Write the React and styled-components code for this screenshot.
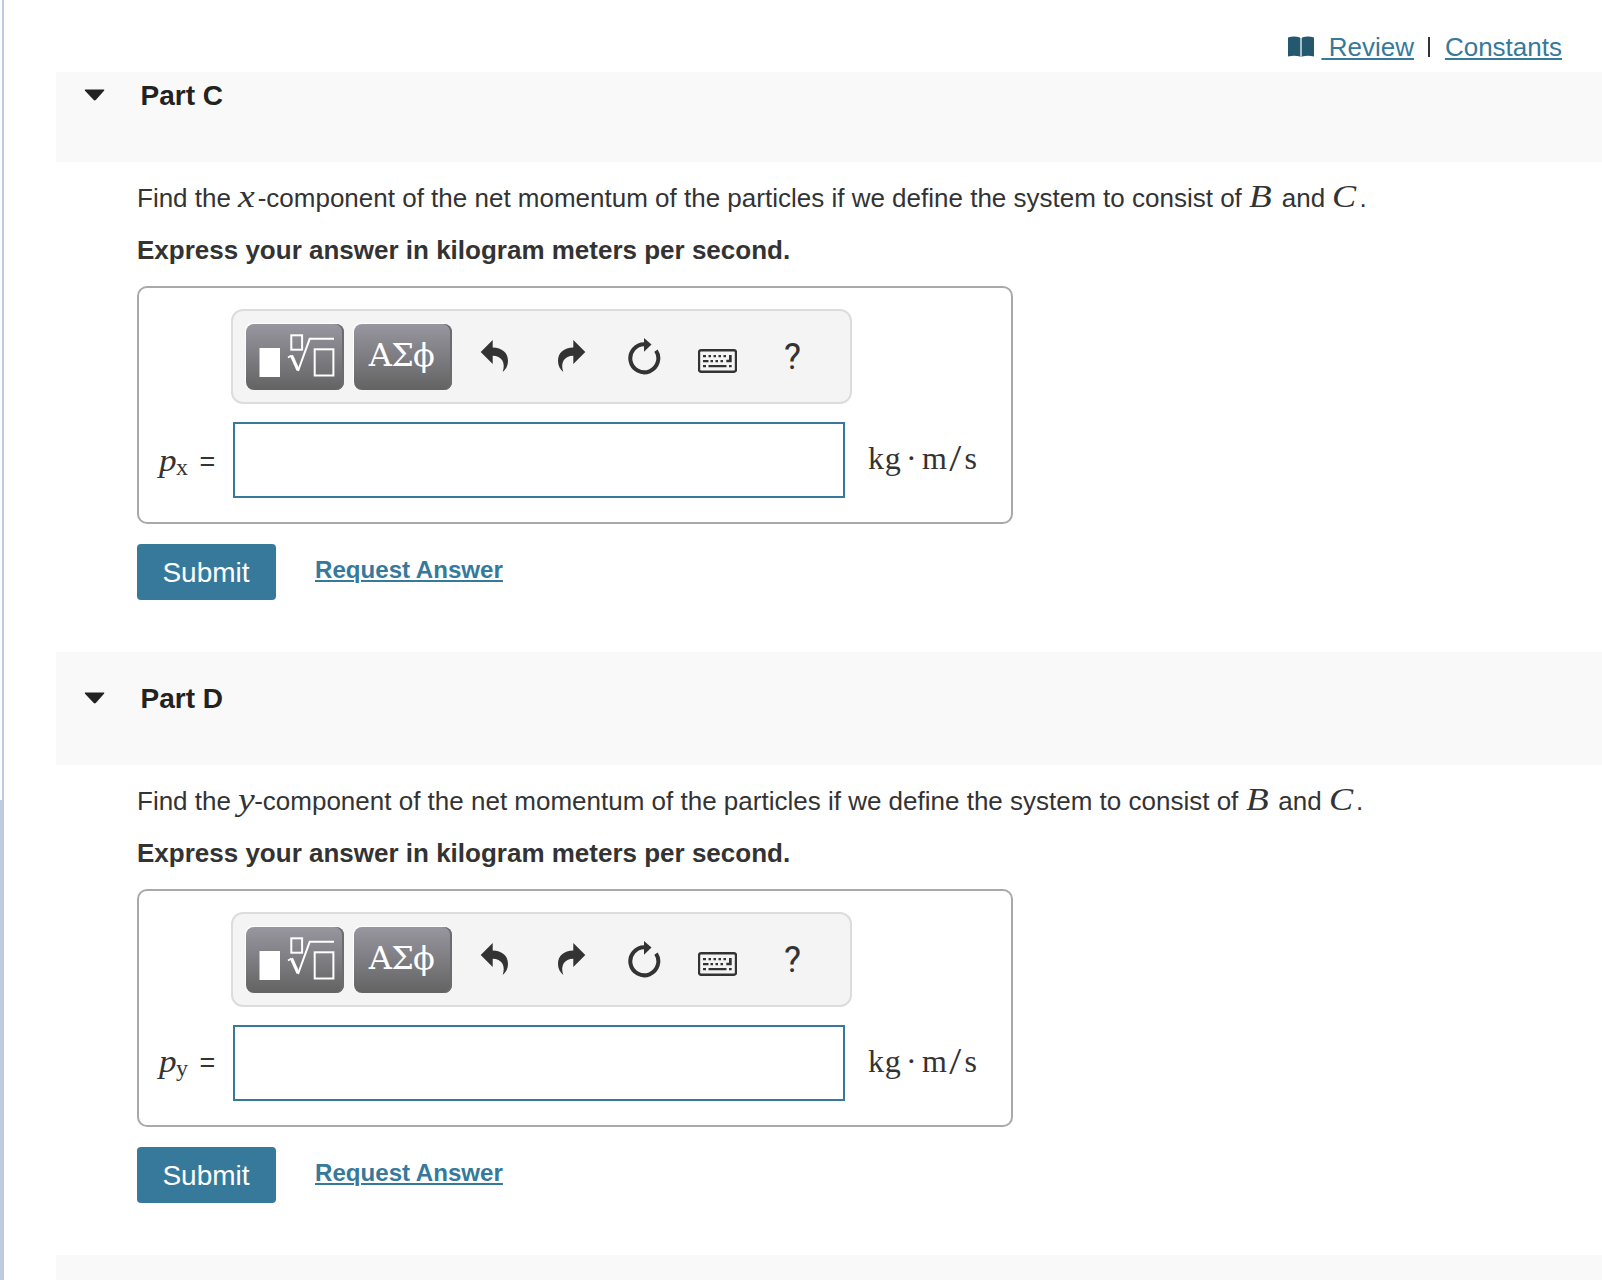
import styled, { createGlobalStyle } from "styled-components"

const parts = [
    { name: "Part C", axis: "x", top: 0, shift: 1 },
    { name: "Part D", axis: "y", top: 23, shift: -3 },
]

const UndoIcon = () => (
    <svg width="29" height="34" viewBox="0 0 29 34" fill="#333">
        <path d="M.7 12 12.700 0v7.600C22 8 28 12.500 28 21c0 4.500-2 8.500-5.300 11C26 22.500 21.500 16 12.700 15.800V24z" />
    </svg>
)

const RedoIcon = () => (
    <svg width="29" height="34" viewBox="0 0 29 34" fill="#333">
        <path d="M28.300 12 16.300 0v7.600C7 8 1 12.500 1 21c0 4.500 2 8.500 5.300 11C3 22.500 7.500 16 16.300 15.800V24z" />
    </svg>
)

const ResetIcon = () => (
    <svg width="34" height="38" viewBox="0 0 34 38">
        <path d="M17.500 6.300a14 14 0 1 0 11.500 6.300" fill="none" stroke="#333" strokeWidth="4" />
        <path d="M17 0 24.500 6.600 17 13.700z" fill="#333" />
    </svg>
)

const KeyboardIcon = () => (
    <svg width="39" height="40" viewBox="0 0 39 40" fill="#333">
        <rect x="1" y="13.300" width="37" height="21.400" rx="2" fill="none" stroke="#333" strokeWidth="2.400" />
        <path d="M5 18h3v2.200H5zm5.500 0h2.500v2.200h-2.500zm5 0H18v2.200h-2.500zm5 0H23v2.200h-2.500zm5 0H28v2.200h-2.500zm5.500 0h2.700v7.200H28.300v-2.400H31z" />
        <path d="M5 22.900h5.500v2.300H5zm7.500 0H15v2.300h-2.500zm5 0H20v2.300h-2.500zm5 0H25v2.300h-2.500z" />
        <path d="M5 28h3v2.300H5zm5.500 0h18v2.300h-18zm20.500 0h2.700v2.300H31z" />
    </svg>
)

const TemplateIcon = () => (
    <svg width="98" height="66" viewBox="0 0 98 66" fill="none" stroke="#fff">
        <rect x="13.500" y="24" width="20.500" height="29" fill="#fff" stroke="none" />
        <rect x="45.300" y="11.300" width="10.800" height="14.400" strokeWidth="2" />
        <path d="M42 33.500 45.500 31.500" strokeWidth="2" />
        <path d="M45.500 31.500 52 46" strokeWidth="3.200" />
        <path d="M52 47 63.700 14.800H88" strokeWidth="2" />
        <rect x="68.700" y="25.300" width="18.700" height="26.200" strokeWidth="2" />
    </svg>
)

const BookIcon = () => (
    <svg width="26" height="22" viewBox="0 0 26 22">
        <path d="M0 1.500Q6-.6 12 1.500V20.500Q6 18.800 0 20.500zM14 1.500Q20-.6 26 1.500V20.500Q20 18.800 14 20.500z" fill="#24586e" />
        <path d="M13 2V21" stroke="#a9bfc9" strokeWidth="2" />
    </svg>
)

const Part = ({ name, axis, top, shift }) => (
    <section>
        <PartHeader $top={top}>
            <svg width="22" height="12" viewBox="0 0 22 12">
                <path d="M1.500.5h18q1.500 0 .5 1.200L12 10.800q-1.200 1.200-2.500 0L1 1.700Q.3.500 1.500.5z" fill="#222" />
            </svg>
            <h2>{name}</h2>
        </PartHeader>
        <PartBody>
            <Question>
                Find the <Var $w={axis === "x" ? 19.5 : 16} $stretch={1.18}>{axis}</Var>-component of the net momentum of the particles if we define the system to consist of <Var $w={25.5} $stretch={1.16}>B</Var> and <Var $w={27} $stretch={1.13}>C</Var>.
            </Question>
            <Instruction>Express your answer in kilogram meters per second.</Instruction>
            <AnswerBox>
                <Toolbar>
                    <MathButton><TemplateIcon /></MathButton>
                    <MathButton>ΑΣϕ</MathButton>
                    <IconButton $gap={28}><UndoIcon /></IconButton>
                    <IconButton $gap={48}><RedoIcon /></IconButton>
                    <IconButton $gap={40.5}><ResetIcon /></IconButton>
                    <IconButton $gap={37.5}><KeyboardIcon /></IconButton>
                    <IconButton $gap={47}>?</IconButton>
                </Toolbar>
                <AnswerRow>
                    <Label $shift={shift}>
                        <i>p</i><small>{axis}</small><b>=</b>
                    </Label>
                    <AnswerInput />
                    <Unit>kg<span>·</span>m<em>/</em>s</Unit>
                </AnswerRow>
            </AnswerBox>
            <Actions>
                <Submit>Submit</Submit>
                <RequestLink href="#none">Request Answer</RequestLink>
            </Actions>
        </PartBody>
    </section>
)

const App = () => {
    return (
        <Page>
            <GlobalStyle />
            <Rail><div /></Rail>
            <Main>
                <TopLinks>
                    <BookIcon />
                    <a href="#none">&nbsp;Review</a>
                    <Divider />
                    <a href="#none">Constants</a>
                </TopLinks>
                {parts.map((part) => <Part key={part.name} {...part} />)}
                <NextHeader />
            </Main>
        </Page>
    )
}

const GlobalStyle = createGlobalStyle`
	* {
		box-sizing: border-box;
	}
	body {
		margin: 0;
		background-color: #fff;
		color: #333;
		font-family: "Liberation Sans", Arial, sans-serif;
		font-size: 26px;
		overflow: hidden;
	}
	svg {
		display: block;
		flex-shrink: 0;
	}
`;
const Page = styled.div`
	display: flex;
	height: 1280px;
	overflow: hidden;
`;
const Rail = styled.div`
	width: 4px;
	margin-right: 52px;
	padding-top: 800px;
	border-right: 2px solid #bfcbdf;
	flex-shrink: 0;
	div {
		height: 480px;
		background-color: #bfcbdf;
	}
`;
const Main = styled.main`
	flex: 1;
	min-width: 0;
`;
const TopLinks = styled.nav`
	height: 72px;
	padding: 22px 40px 0 0;
	display: flex;
	justify-content: flex-end;
	line-height: 50px;
	svg {
		margin: 14px 7px 0 0;
	}
	a {
		color: #36799b;
		text-decoration-thickness: 2px;
		text-underline-offset: 2px;
	}
`;
const Divider = styled.span`
	width: 2px;
	height: 20px;
	margin: 15px 15px 0 14px;
	background-color: #333;
`;
const PartHeader = styled.header`
	height: ${(p) => 90 + p.$top}px;
	padding: ${(p) => p.$top}px 0 0 28px;
	display: flex;
	background-color: #f9f9f9;
	svg {
		margin: 17px 0 0 -0.5px;
	}
	h2 {
		margin: 0 0 0 35px;
		font-size: 28px;
		line-height: 48px;
		color: #222;
	}
`;
const NextHeader = styled.div`
	height: 25px;
	background-color: #f9f9f9;
`;
const PartBody = styled.div`
	height: 490px;
	padding: 16px 0 0 81px;
`;
const Question = styled.p`
	margin: 0 0 12px;
	height: 40px;
	line-height: 40px;
	white-space: nowrap;
`;
const Var = styled.i`
	display: inline-block;
	width: ${(p) => p.$w}px;
	line-height: 1;
	font-family: "Liberation Serif", serif;
	font-size: 32px;
	transform: scaleX(${(p) => p.$stretch});
	transform-origin: left;
`;
const Instruction = styled.p`
	margin: 0 0 16px;
	line-height: 40px;
	font-weight: bold;
`;
const AnswerBox = styled.div`
	width: 876px;
	height: 238px;
	padding-top: 21px;
	border: 2px solid #a9a9a9;
	border-radius: 10px;
`;
const Toolbar = styled.div`
	width: 621px;
	height: 95px;
	margin: 0 0 18px 92px;
	padding: 13px;
	display: flex;
	border: 2px solid #dcdcdc;
	border-radius: 12px;
	background-color: #f4f4f4;
`;
const MathButton = styled.button`
	width: 98px;
	height: 66px;
	margin: 0 10px 0 0;
	padding: 0 3px 5px 0;
	border: 0;
	border-radius: 8px;
	background: linear-gradient(#98969f, #636363);
	box-shadow: -1px -1px 0 #fff, inset -2px 0 0 #6c6c6e;
	color: #fff;
	font: 32px "DejaVu Serif", serif;
	letter-spacing: -0.7px;
	& + & {
		margin-right: 0;
	}
	&:first-child {
		padding: 0;
	}
`;
const IconButton = styled.button`
	height: 66px;
	margin: 0 0 0 ${(p) => p.$gap}px;
	padding: 0;
	border: 0;
	background: none;
	color: #333;
	font: 400 36px/64px Roboto, sans-serif;
`;
const AnswerRow = styled.div`
	display: flex;
	height: 76px;
`;
const Label = styled.div`
	width: 94px;
	padding-left: 20px;
	margin-top: ${(p) => p.$shift / 2}px;
	display: flex;
	align-items: baseline;
	font-family: "Liberation Serif", serif;
	line-height: 74px;
	i {
		width: 17px;
		font-size: 32px;
		transform: scaleX(1.1);
		transform-origin: left;
	}
	small {
		width: 23.5px;
		font-size: 24px;
		transform: translateY(3.5px);
	}
	b {
		font: 27px "Liberation Sans", sans-serif;
	}
`;
const AnswerInput = styled.input`
	width: 612px;
	height: 76px;
	border: 2px solid #36799b;
	background-color: #fff;
	outline: 0;
`;
const Unit = styled.div`
	margin-left: 23px;
	font-family: "Liberation Serif", serif;
	font-size: 32px;
	line-height: 72px;
	letter-spacing: 0.8px;
	span {
		margin: 0 4.5px;
	}
	em {
		font-style: normal;
		display: inline-block;
		line-height: 1;
		transform: scale(1.35, 1.2);
		margin: 0 4px 0 3px;
	}
`;
const Actions = styled.div`
	margin-top: 20px;
	display: flex;
`;
const Submit = styled.button`
	width: 139px;
	height: 56px;
	padding: 1px 1px 0 0;
	border: 0;
	border-radius: 4px;
	background-color: #36799b;
	color: #fff;
	font: 28px "Liberation Sans", sans-serif;
`;
const RequestLink = styled.a`
	margin-left: 39px;
	line-height: 52px;
	font-size: 24.1px;
	font-weight: bold;
	color: #36799b;
	text-decoration-thickness: 2px;
	text-underline-offset: 2px;
`;
export default App;
